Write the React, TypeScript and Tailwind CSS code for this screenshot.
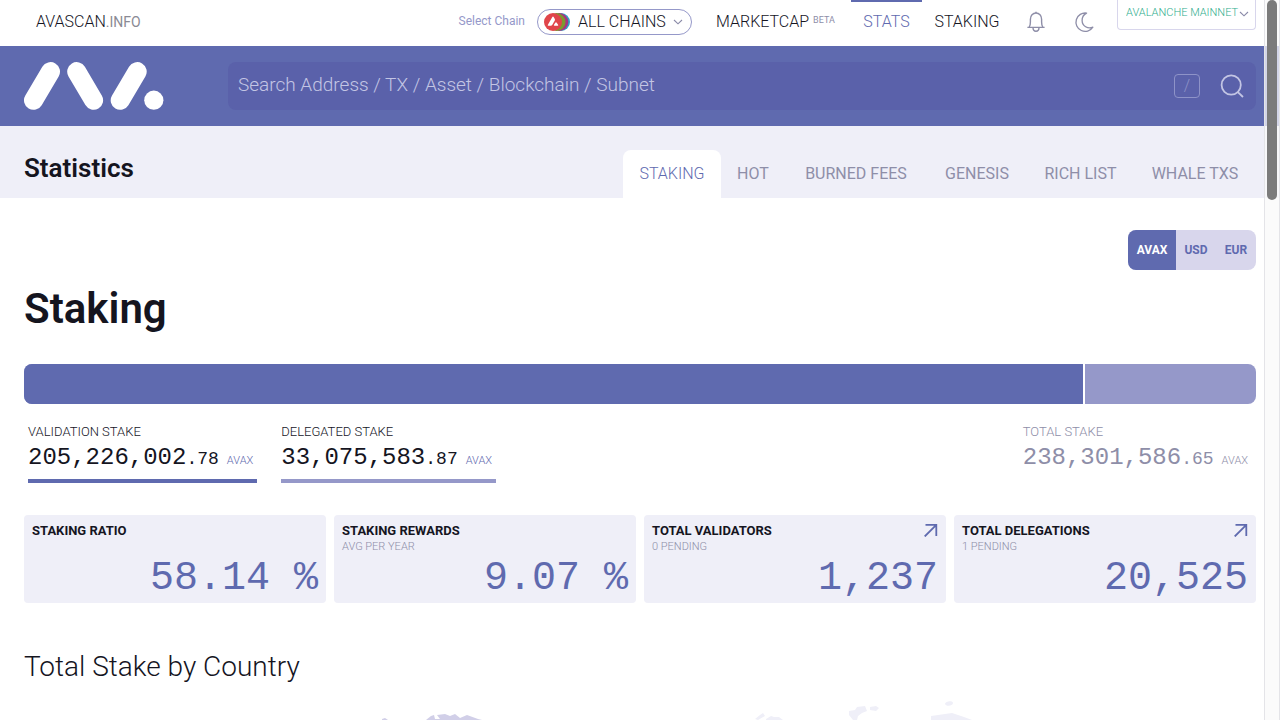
import React from 'react';
import { clsx } from 'clsx';

const TABS = [
  { label: 'STAKING', width: 'w-[98px]' },
  { label: 'HOT', width: 'w-[64px]' },
  { label: 'BURNED FEES', width: 'w-[142px]' },
  { label: 'GENESIS', width: 'w-[100px]' },
  { label: 'RICH LIST', width: 'w-[107px]' },
  { label: 'WHALE TXS', width: 'w-[122px]' },
];

const CURRENCIES = ['AVAX', 'USD', 'EUR'];

const CARDS = [
  { title: 'STAKING RATIO', note: '', value: '58.14 %', link: false },
  { title: 'STAKING REWARDS', note: 'AVG PER YEAR', value: '9.07 %', link: false },
  { title: 'TOTAL VALIDATORS', note: '0 PENDING', value: '1,237', link: true },
  { title: 'TOTAL DELEGATIONS', note: '1 PENDING', value: '20,525', link: true },
];

const VALIDATION_SHARE = 86.12;

const Logo = () => (
  <svg viewBox="0 0 140 48" className="h-12 w-[140px]" aria-label="Avascan" role="img">
    <g stroke="#fff" strokeWidth="19" strokeLinecap="round">
      <path d="M9.5 38.3 26.5 9.6" />
      <path d="M52.7 9.6 69.6 38.3" />
      <path d="M96.2 38.3 113.2 9.6" />
    </g>
    <circle cx="129.8" cy="38.2" r="9.6" fill="#fff" />
  </svg>
);

const ChainsIcon = () => (
  <svg viewBox="0 0 26 18" className="h-[18px] w-[26px] shrink-0" aria-hidden="true">
    <circle cx="17" cy="9" r="9" fill="#2fa3c4" />
    <circle cx="15.3" cy="9" r="9" fill="#a8357f" />
    <circle cx="12.5" cy="9" r="9" fill="#7d9a2c" />
    <circle cx="9" cy="9" r="9" fill="#e0454a" />
    <path
      d="M8.2 4.2Q9 3 9.8 4.2L10.8 6Q11.2 6.8 10.8 7.6L8.2 12Q7.7 12.8 6.8 12.8H4.4Q3.3 12.8 3.9 11.7ZM11.3 9.7Q12 8.7 12.7 9.7L14.1 11.8Q14.7 12.8 13.6 12.8H10.6Q9.4 12.8 10 11.8Z"
      fill="#fff"
    />
  </svg>
);

const Chevron = () => (
  <svg viewBox="0 0 10 6" className="pointer-events-none h-[6px] w-[10px] shrink-0" aria-hidden="true">
    <path d="M1 1 5 4.8 9 1" fill="none" stroke="#8a8aa8" strokeWidth="1.1" />
  </svg>
);

const BellIcon = () => (
  <svg viewBox="0 0 20 22" className="h-[22px] w-5" fill="none" stroke="#8e8ea8" strokeWidth="1.4" aria-hidden="true">
    <path d="M1.4 16.4H18.6M3.2 16.2C4.1 14.9 4.4 13.2 4.4 11V8.2C4.4 4.7 6.8 2 10 2S15.6 4.7 15.6 8.2V11C15.6 13.2 15.9 14.9 16.8 16.2" />
    <path d="M7 16.6C7 18.9 8.1 20.3 10 20.3S13 18.9 13 16.6" />
    <path d="M10 2V.8" />
  </svg>
);

const MoonIcon = () => (
  <svg viewBox="0 0 20 22" className="h-[22px] w-5" fill="none" stroke="#8e8ea8" strokeWidth="1.3" strokeLinejoin="round" aria-hidden="true">
    <path d="M12.6 2.1A9.2 9.2 0 1 0 18.9 16.2 7.6 7.6 0 0 1 8.1 9.4C8.1 6.2 9.8 3.4 12.6 2.1Z" />
  </svg>
);

const SearchIcon = () => (
  <svg viewBox="0 0 24 24" className="h-6 w-6" fill="none" stroke="#c3c5e4" strokeWidth="1.8" aria-hidden="true">
    <circle cx="11.2" cy="11" r="9.6" />
    <path d="M17.6 17.8 23 23" />
  </svg>
);

const ArrowIcon = () => (
  <svg viewBox="0 0 14 14" className="h-[14px] w-[14px]" fill="none" stroke="#5f6aaf" strokeWidth="1.8" aria-hidden="true">
    <path d="M1.5 1.9H12.3V13M12.3 1.9.7 13.5" />
  </svg>
);

const TopBar = () => (
  <div className="flex h-[46px] items-start justify-between bg-white pr-6 pl-9">
    <a href="#home" className="text-base leading-[43px]">
      AVASCAN<span className="text-sm font-normal text-[#8a8a94]">.INFO</span>
    </a>
    <div className="flex items-start">
      <label htmlFor="chain" className="mr-3 text-xs leading-[43px] font-normal text-[#9598c9]">Select Chain</label>
      <div className="relative mt-[9px] mr-3 flex h-[26px] w-[155px] items-center rounded-full border border-[#9598c9] pl-[6px]">
        <ChainsIcon />
        <select id="chain" className="absolute inset-0 w-full appearance-none rounded-full bg-transparent pl-10 text-base outline-none">
          <option>ALL CHAINS</option>
        </select>
        <span className="absolute right-2 flex"><Chevron /></span>
      </div>
      <nav className="flex text-base leading-[43px]">
        <a href="#marketcap" className="flex w-[147px] gap-1 pl-3">
          MARKETCAP <span className="text-[9px] leading-10 font-normal text-[#8e8ea8]">BETA</span>
        </a>
        <a href="#stats" className="w-[71px] border-t-2 border-[#5f6aaf] text-center leading-[39px] text-[#5f6aaf]">STATS</a>
        <a href="#staking" className="w-[90px] text-center">STAKING</a>
      </nav>
      <button aria-label="Notifications" className="mt-[11px] ml-[14px]"><BellIcon /></button>
      <button aria-label="Dark mode" className="mt-[11px] mr-[23px] ml-7"><MoonIcon /></button>
      <div className="relative flex h-[30px] w-[139px] items-center rounded-b border border-t-0 border-[#d8d6ec]">
        <select aria-label="Network" className="h-full w-full appearance-none bg-transparent pb-[2px] pl-2 text-[11px] text-[#2fae8e] outline-none">
          <option>AVALANCHE MAINNET</option>
        </select>
        <span className="absolute top-[11px] right-[6px] flex"><Chevron /></span>
      </div>
    </div>
  </div>
);

const SearchBar = () => (
  <div className="flex h-20 items-center gap-16 bg-[#5f6aaf] px-6">
    <a href="#home" className="shrink-0"><Logo /></a>
    <form className="flex h-12 flex-1 items-center rounded-lg bg-[#5a61aa] pr-3 pl-[10px]">
      <input
        type="text"
        aria-label="Search"
        placeholder="Search Address / TX / Asset / Blockchain / Subnet"
        className="h-11 min-w-0 flex-1 bg-transparent pb-1 text-[19px] font-light outline-none placeholder:text-[#c3c5e4]"
      />
      <kbd className="flex h-6 w-[26px] items-center justify-center rounded-sm border border-[#8e93c8] font-['Roboto',sans-serif] text-base text-[#8e93c8]">/</kbd>
      <button type="button" aria-label="Search" className="ml-5"><SearchIcon /></button>
    </form>
  </div>
);

interface StakeProps {
  label: string;
  whole: string;
  cents: string;
  className: string;
  unitClassName?: string;
}

const Stake = ({ label, whole, cents, className, unitClassName }: StakeProps) => (
  <div className={clsx('pb-[7px]', className)}>
    <div className="text-[13px] leading-4">{label}</div>
    <div className="flex h-8 items-baseline pr-1 whitespace-nowrap">
      <span className="font-['Liberation_Mono',monospace] text-2xl leading-9">{whole}</span>
      <span className="font-['Liberation_Mono',monospace] text-lg leading-8">{cents}</span>
      <span className={clsx('ml-2 text-[11px]', unitClassName)}>AVAX</span>
    </div>
  </div>
);

export default function App() {
  return (
    <div className="relative h-screen overflow-hidden bg-white font-['Roboto',sans-serif] font-light text-[#15151f]">
      <TopBar />
      <SearchBar />

      <div className="flex h-[72px] items-end justify-between bg-[#efeff8] px-6">
        <h2 className="pb-3 text-[26px] leading-9 font-semibold">Statistics</h2>
        <nav className="flex text-base leading-[48px] text-[#8e8ea8]">
          {TABS.map((tab, i) => (
            <a
              key={tab.label}
              href="#tab"
              className={clsx('h-12 rounded-t-lg text-center whitespace-nowrap', tab.width, i === 0 ? 'bg-white text-[#5f6aaf]' : 'font-normal')}
            >
              {tab.label}
            </a>
          ))}
        </nav>
      </div>

      <main className="px-6 pt-8">
        <div className="flex justify-end">
          <div className="flex h-10 overflow-hidden rounded-lg bg-[#d8d6ec] text-xs font-bold text-[#5f6aaf]">
            {CURRENCIES.map((c, i) => (
              <button key={c} className={clsx(i === 0 ? 'w-12 bg-[#5f6aaf] text-white' : 'w-10')}>{c}</button>
            ))}
          </div>
        </div>

        <h1 className="mt-4 mb-8 text-[42px] leading-[46px] font-semibold">Staking</h1>

        <div className="flex h-10 overflow-hidden rounded-lg bg-[#9598c9]">
          <div className="border-r-2 border-white bg-[#5f6aaf]" style={{ width: `${VALIDATION_SHARE}%` }} />
        </div>

        <div className="mt-5 flex gap-6 px-1">
          <Stake label="VALIDATION STAKE" whole="205,226,002" cents=".78" className="border-b-4 border-[#5f6aaf]" unitClassName="text-[#5f6aaf]" />
          <Stake label="DELEGATED STAKE" whole="33,075,583" cents=".87" className="border-b-4 border-[#9598c9]" unitClassName="text-[#5f6aaf]" />
          <Stake label="TOTAL STAKE" whole="238,301,586" cents=".65" className="ml-auto text-[#8e8ea8]" />
        </div>

        <div className="mt-8 grid grid-cols-4 gap-2">
          {CARDS.map(card => (
            <section key={card.title} className="h-[88px] rounded bg-[#efeff8] px-2 pt-2">
              <div className="flex h-8 justify-between">
                <div>
                  <h3 className="text-[13px] leading-4 font-bold">{card.title}</h3>
                  <p className="text-[11px] leading-4 text-[#8e8ea8]">{card.note}</p>
                </div>
                {card.link && <a href="#details" aria-label={card.title}><ArrowIcon /></a>}
              </div>
              <div className="text-right font-['Liberation_Mono',monospace] text-[40px] leading-[48px] text-[#5f6aaf]">{card.value}</div>
            </section>
          ))}
        </div>

        <h2 className="mt-11 text-[28px] leading-10">Total Stake by Country</h2>

        {/* World map, only its northern edge is above the fold */}
        <svg viewBox="0 0 1232 40" className="mt-3 w-full" aria-hidden="true">
          <path d="M358 20 361 19 364 21H358ZM402 21 407 17 410 16 411 20 416 20 413 16 421 15 426 17 431 15 436 19 443 16 454 20 462 22 470 40H410Z" fill="#d1cfe8" />
          <g fill="#efeff8">
            <path d="M731 20 736 16 739 14 741 17 734 21ZM742 20 747 17 750 18 755 18 759 21H742Z" />
            <path d="M825 12 831 11 833 8 841 7 843 12 838 14 834 17 833 21H829L825 16ZM846 8 852 7 855 9 852 12 846 11Z" />
            <path d="M907 17 928 14 940 18 948 21 960 40H907ZM921 5C921 2 929 1 929 4S922 8 921 5Z" />
          </g>
        </svg>
      </main>

      {/* Scrollbar track and thumb lie over the page edge */}
      <div className="absolute inset-y-0 right-0 w-4 border-x border-[#e4e4e8] bg-[#fafafa]/75 px-[2px]">
        <div className="h-[200px] rounded-full bg-[#7b7b7b]" />
      </div>
    </div>
  );
}
